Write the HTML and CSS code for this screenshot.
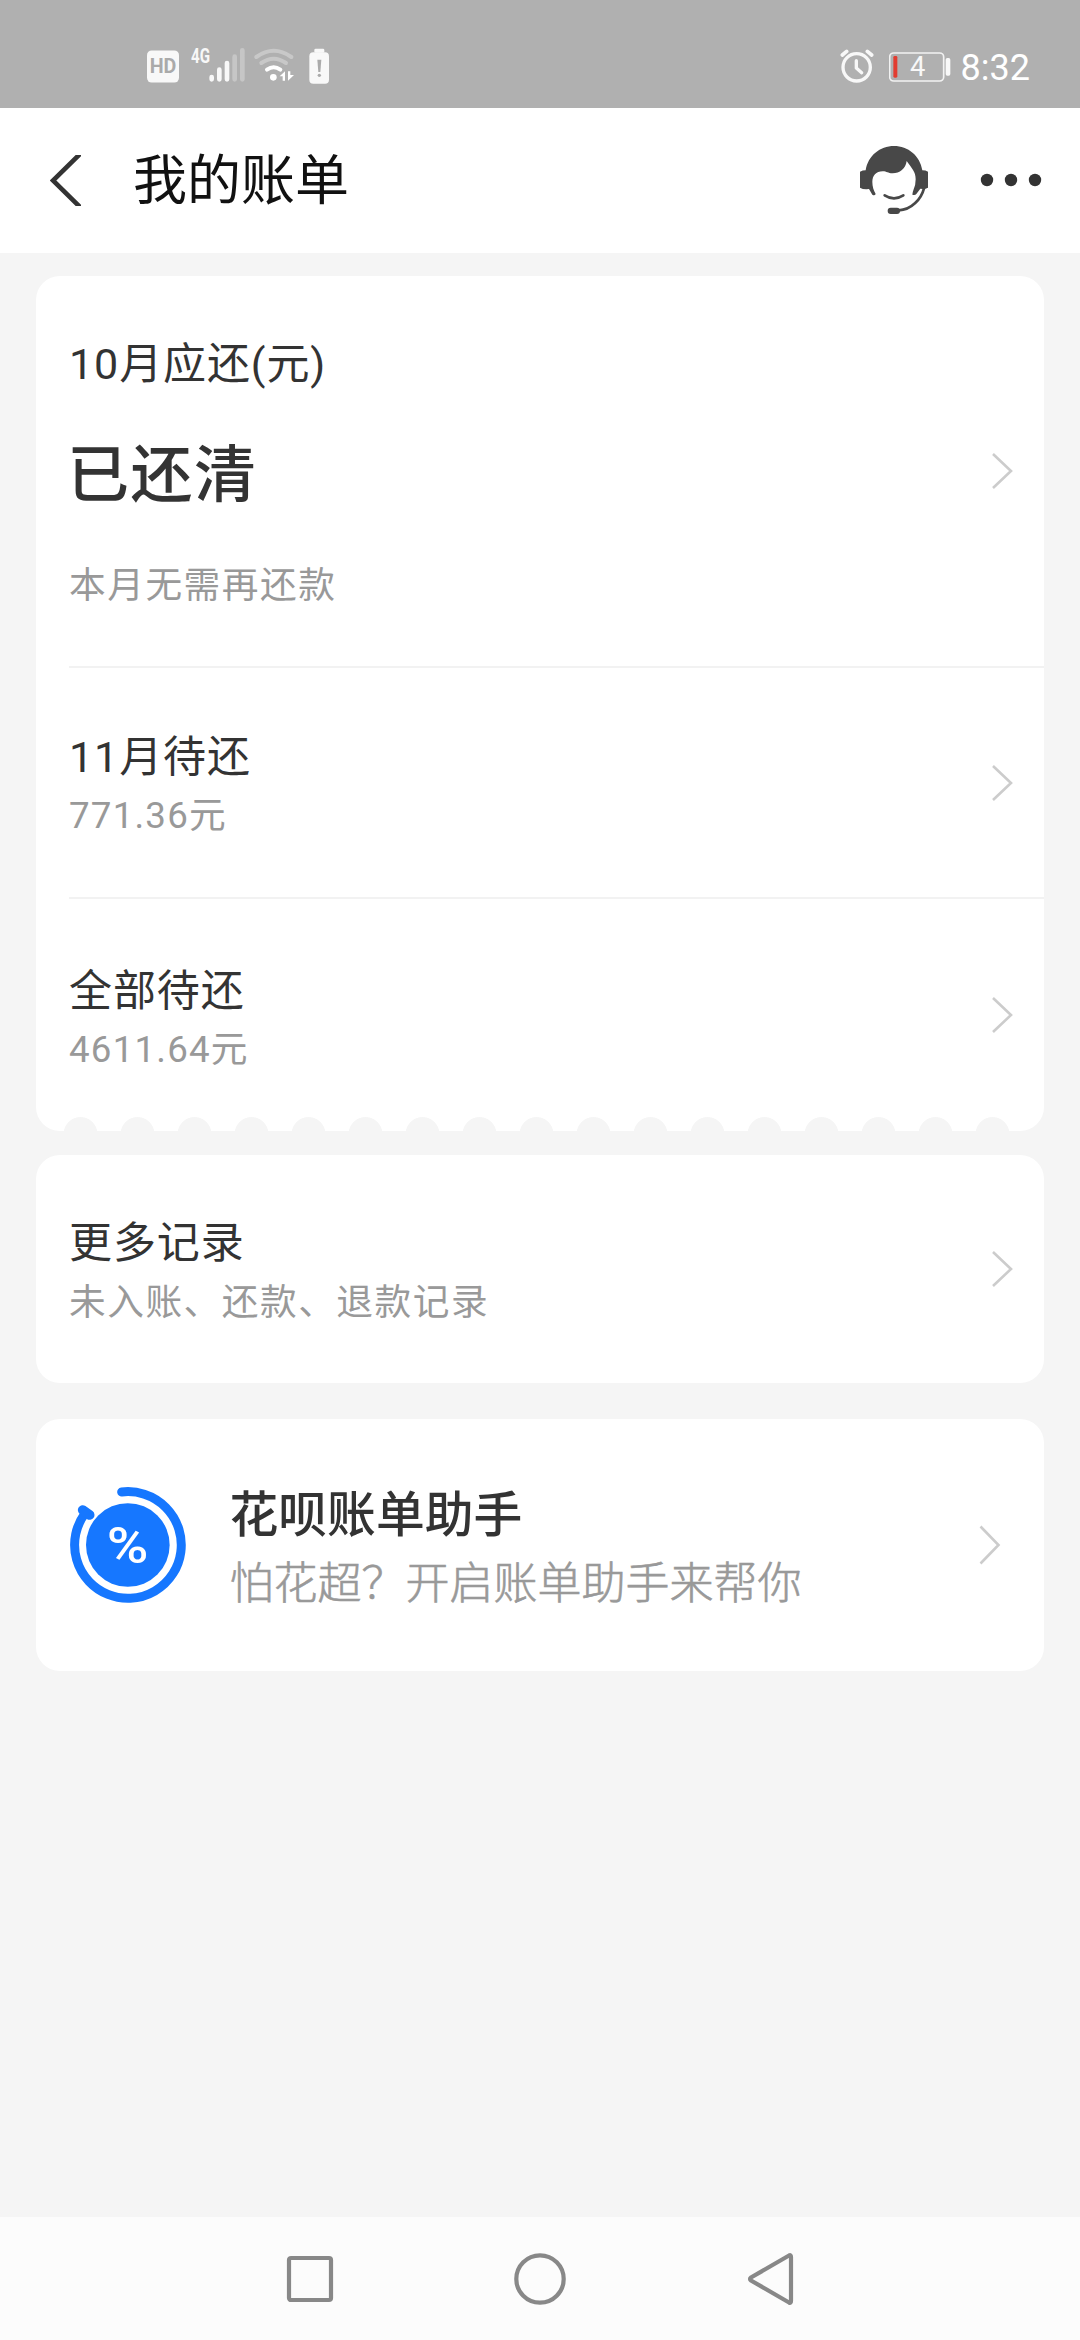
FILE: index.html
```html
<!DOCTYPE html>
<html lang="zh-CN">
<head>
<meta charset="utf-8">
<title>我的账单</title>
<link rel="stylesheet" href="styles.css">
</head>
<body>
<div class="screen">
  <div class="status-bar">
    <div class="status-left">
      <svg class="icon-hd" width="32" height="33" viewBox="83 62 96 96">
        <rect x="83" y="62" width="96" height="96" rx="14" fill="#f8f8f8"/>
        <text x="131" y="131" text-anchor="middle" class="hd-text" textLength="80" lengthAdjust="spacingAndGlyphs">HD</text>
      </svg>
      <svg class="icon-signal" width="60" height="40" viewBox="203 47 180 120">
        <text x="212" y="101" class="net-text" textLength="57" lengthAdjust="spacingAndGlyphs">4G</text>
        <g stroke="#f8f8f8" stroke-width="14" stroke-linecap="round">
          <path d="M274 143v7M297 121v29M320 101v49"/>
          <path d="M343 82v68M366 63v87" stroke="#c6c6c6"/>
        </g>
      </svg>
      <svg class="icon-wifi" width="40" height="34" viewBox="401 56 120 102">
        <g fill="none" stroke-width="12" stroke-linecap="round">
          <path d="M408 83Q460 46 513 83" stroke="#c8c8c8"/>
          <path d="M423 101Q460 75 497 101" stroke="#c8c8c8"/>
          <path d="M440 121Q460 107 480 121" stroke="#fff"/>
        </g>
        <circle cx="459" cy="144" r="10" fill="#fff"/>
        <path d="M478 141l16-15v28h-7v-13zM503 126v28l18-17h-11v-11z" fill="#fff"/>
      </svg>
      <svg class="icon-alert" width="20" height="36" viewBox="568 55 60 108">
        <rect x="584" y="57" width="30" height="12" rx="4" fill="#f8f8f8"/>
        <rect x="569" y="68" width="59" height="94" rx="12" fill="#f8f8f8"/>
        <path d="M593 90h12l-3 37h-6z" fill="#aaa"/>
        <circle cx="599" cy="137" r="5" fill="#aaa"/>
      </svg>
    </div>
    <div class="status-right">
      <svg class="icon-alarm" width="34" height="34" viewBox="59 58 102 102">
        <g fill="none" stroke="#f8f8f8" stroke-linecap="round">
          <circle cx="109" cy="113" r="41" stroke-width="10"/>
          <path d="M108 93v22l16 14" stroke-width="10" stroke-linejoin="round"/>
          <path d="M66 76l13-11M141 65l13 11" stroke-width="11"/>
        </g>
      </svg>
      <svg class="icon-battery" width="62" height="38" viewBox="204 53 186 114">
        <rect x="206" y="68" width="162" height="84" rx="12" fill="none" stroke="#f2f2f2" stroke-width="5"/>
        <rect x="217" y="77" width="12" height="65" rx="4" fill="#e23c30"/>
        <rect x="374" y="83" width="14" height="53" rx="5" fill="#f8f8f8"/>
        <text x="290" y="138" text-anchor="middle" class="battery-text">4</text>
      </svg>
      <span class="clock">8:32</span>
    </div>
  </div>

  <div class="header">
    <svg class="icon-back" width="31" height="51" viewBox="50 154 31 51">
      <path d="M82 151L53 179.5L82 208" fill="none" stroke="#333" stroke-width="4.6"/>
    </svg>
    <h1 class="title">我的账单</h1>
    <svg class="icon-agent" width="68" height="68" viewBox="120 108 204 204">
      <g fill="#484848">
        <path d="M120 185Q128 181 137 181C144 137 180 108 222 108S300 137 307 181Q317 181 324 185V233Q317 237 309 237L301 236L289 252Q285 257 277 254Q278 246 281 238Q287 225 287 208C287 184 275 175 260 153C257 176 239 190 218 190C203 190 201 184 188 184C168 184 157 197 157 216C157 230 161 242 167 252Q164 258 157 254L147 237Q130 239 120 233Z"/>
        <rect x="203" y="293" width="37" height="19" rx="9"/>
      </g>
      <g fill="none" stroke="#484848" stroke-linecap="round">
        <path d="M194 256Q222 274 250 256" stroke-width="8"/>
        <path d="M312 235C304 266 275 300 236 301" stroke-width="8"/>
      </g>
    </svg>
    <svg class="icon-more" width="62" height="14" viewBox="0 0 62 14" fill="#333">
      <circle cx="7" cy="7" r="6.2"/><circle cx="31" cy="7" r="6.2"/><circle cx="55" cy="7" r="6.2"/>
    </svg>
  </div>

  <div class="content">
    <div class="card card-bills">
      <div class="row row-current">
        <div class="row-text">
          <div class="label">10月应还(元)</div>
          <div class="amount">已还清</div>
          <div class="note">本月无需再还款</div>
        </div>
        <svg class="chevron" width="22" height="36" viewBox="0 0 22 36"><path d="M1 1L19 18L1 35"/></svg>
      </div>
      <div class="row row-next">
        <div class="row-text">
          <div class="label">11月待还</div>
          <div class="note note-sum">771.36元</div>
        </div>
        <svg class="chevron" width="22" height="36" viewBox="0 0 22 36"><path d="M1 1L19 18L1 35"/></svg>
      </div>
      <div class="row row-total">
        <div class="row-text">
          <div class="label">全部待还</div>
          <div class="note note-sum">4611.64元</div>
        </div>
        <svg class="chevron" width="22" height="36" viewBox="0 0 22 36"><path d="M1 1L19 18L1 35"/></svg>
      </div>
      <div class="scallops"></div>
    </div>

    <div class="card card-more">
      <div class="row row-more">
        <div class="row-text">
          <div class="label">更多记录</div>
          <div class="note">未入账、还款、退款记录</div>
        </div>
        <svg class="chevron" width="22" height="36" viewBox="0 0 22 36"><path d="M1 1L19 18L1 35"/></svg>
      </div>
    </div>

    <div class="card card-helper">
      <svg class="icon-helper" width="116" height="116" viewBox="150 263 348 348">
        <circle cx="323.500" cy="437" r="125.500" fill="#1677ff"/>
        <path d="M305 278A160 160 0 1 1 195 342" fill="none" stroke="#1677ff" stroke-width="27" stroke-linecap="round"/>
        <path d="M188 332L209 347" stroke="#1677ff" stroke-width="29" stroke-linecap="round"/>
        <text x="323" y="490" text-anchor="middle" class="percent" textLength="125" lengthAdjust="spacingAndGlyphs">%</text>
      </svg>
      <div class="helper-text">
        <div class="helper-title">花呗账单助手</div>
        <div class="helper-sub">怕花超？开启账单助手来帮你</div>
      </div>
      <svg class="chevron chevron-helper" width="22" height="40" viewBox="0 0 22 40"><path d="M1.500 1.500L19.500 20L1.500 38.500"/></svg>
    </div>
  </div>

  <div class="nav-bar">
    <svg width="54" height="54" viewBox="0 0 54 54"><rect x="6" y="6" width="42" height="42" rx="2"/></svg>
    <svg width="54" height="54" viewBox="0 0 54 54"><circle cx="27" cy="27" r="23.700"/></svg>
    <svg width="54" height="54" viewBox="0 0 54 54"><path d="M46 3.500Q48 2.500 48 5V49Q48 51.500 46 50.500L8 28.500Q6 27 8 25.500Z"/></svg>
  </div>
</div>
</body>
</html>
```

FILE: styles.css
```css
* {
  box-sizing: border-box;
}

body {
  margin: 0;
  background: #f5f5f5;
  font-family: Roboto, "Noto Sans CJK SC", sans-serif;
  color: #333;
}

.screen {
  width: 1080px;
  height: 2340px;
  display: flex;
  flex-direction: column;
}

svg {
  display: block;
  flex: none;
}

/* Status bar */
.status-bar {
  height: 108px;
  padding: 45px 50px 0 147px;
  background: #b0b0b0;
  display: flex;
  justify-content: space-between;
  align-items: flex-start;
}

.status-left,
.status-right {
  display: flex;
  align-items: flex-start;
}

.icon-hd { margin-top: 5px; }
.icon-signal { margin-left: 9px; }
.icon-wifi { margin: 3px 0 0 6px; }
.icon-alert { margin: 3px 0 0 15px; }
.icon-alarm { margin-top: 4px; }
.icon-battery { margin: 3px 0 0 15px; }

.hd-text {
  font: 700 60px Roboto, sans-serif;
  fill: #aaa;
}

.net-text {
  font: 700 60px Roboto, sans-serif;
  fill: #f8f8f8;
}

.battery-text {
  font: 400 82px Roboto, sans-serif;
  fill: #f8f8f8;
}

.clock {
  margin: 3px 0 0 10px;
  font-size: 36px;
  line-height: 40px;
  color: #fff;
}

/* Title bar */
.header {
  height: 145px;
  padding: 0 38px 1px 50px;
  background: #fff;
  display: flex;
  align-items: center;
}

.title {
  flex: 1;
  margin: -7px 0 0 52px;
  font-family: "Noto Sans CJK SC", sans-serif;
  font-weight: 400;
  font-size: 54px;
  line-height: 80px;
  color: #111;
}

.icon-agent { margin-right: 52px; }

/* Cards */
.content {
  flex: 1;
  padding: 23px 36px 0;
}

.card {
  background: #fff;
  border-radius: 24px;
}

.card-bills {
  height: 855px;
  padding-left: 33px;
  position: relative;
}

.row {
  display: flex;
  align-items: center;
  justify-content: space-between;
  padding-right: 30px;
}

.row-text { align-self: flex-start; }

.row-current {
  height: 392px;
  border-bottom: 2px solid #f2f2f2;
}

.row-next {
  height: 231px;
  border-bottom: 2px solid #f2f2f2;
}

.row-total { height: 232px; }
.row-more { height: 228px; }

.row-current .row-text { padding-top: 58px; }
.row-next .row-text { padding-top: 59px; }
.row-total .row-text { padding-top: 62px; }
.row-more .row-text { padding-top: 58px; }

.label {
  font-size: 43px;
  line-height: 60px;
  letter-spacing: 0.9px;
}

.amount {
  margin: 37px 0 0 -2px;
  font-size: 62px;
  font-weight: 500;
  line-height: 90px;
  letter-spacing: 1.5px;
}

.note {
  margin-top: 5px;
  font-size: 36.7px;
  line-height: 50px;
  letter-spacing: 1.5px;
  color: #999;
}

.note-sum {
  margin-top: 4px;
  letter-spacing: 1.2px;
}

.amount + .note { margin-top: 40px; }

.chevron {
  fill: none;
  stroke: #ccc;
  stroke-width: 2.6;
}

/* Perforated lower edge of the bill card */
.scallops {
  position: absolute;
  left: 15.5px;
  bottom: 0;
  width: 969px;
  height: 14px;
  background: radial-gradient(circle at 28.5px 17px, #f5f5f5 16.5px, transparent 17.3px) 0 0 / 57px 14px repeat-x;
}

.card-more {
  margin-top: 24px;
  padding-left: 33px;
}

.card-helper {
  height: 252px;
  margin-top: 36px;
  padding: 0 43px 0 34px;
  display: flex;
  align-items: center;
}

.helper-text {
  flex: 1;
  align-self: flex-start;
  margin-left: 43.5px;
  padding-top: 62px;
  font-family: "Noto Sans CJK SC", sans-serif;
}

.helper-title {
  font-size: 48.8px;
  font-weight: 500;
  line-height: 60px;
}

.helper-sub {
  margin-top: 9px;
  font-size: 44px;
  font-weight: 300;
  line-height: 60px;
  color: #999;
  -webkit-text-stroke: 0.6px #999;
}

.percent {
  font: 500 150px Roboto, sans-serif;
  fill: #fff;
}

/* System navigation */
.nav-bar {
  height: 123px;
  padding: 0 283px;
  background: #fcfcfc;
  display: flex;
  justify-content: space-between;
  align-items: center;
}

.nav-bar svg {
  fill: none;
  stroke: #888;
  stroke-width: 4.2;
}
```
